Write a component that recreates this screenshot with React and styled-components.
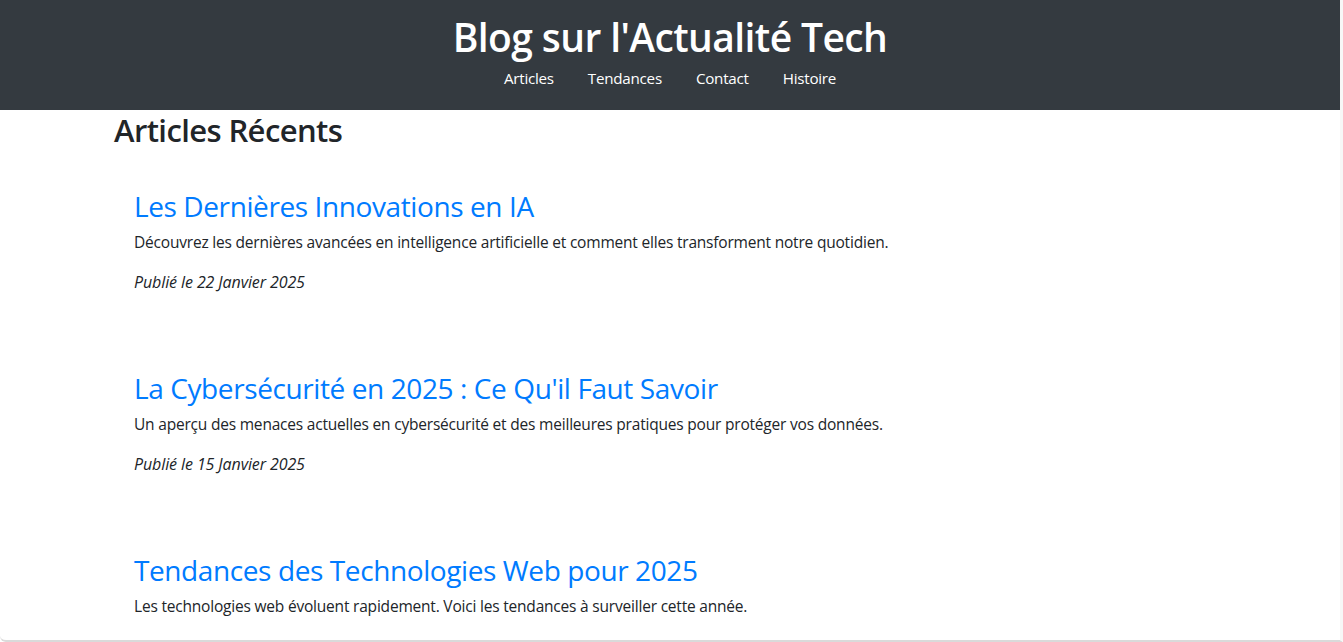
import styled, { createGlobalStyle } from 'styled-components'

const GlobalStyle = createGlobalStyle`
    html, body {
        margin: 0;
        padding: 0;
        background: #ffffff;
        overflow: hidden;
    }

    body {
        font-family: 'Open Sans', 'Noto Sans', sans-serif;
        color: #212529;
    }
`

const articles = [
    {
        title: 'Les Dernières Innovations en IA',
        text: 'Découvrez les dernières avancées en intelligence artificielle et comment elles transforment notre quotidien.',
        date: '22 Janvier 2025',
    },
    {
        title: "La Cybersécurité en 2025 : Ce Qu'il Faut Savoir",
        text: 'Un aperçu des menaces actuelles en cybersécurité et des meilleures pratiques pour protéger vos données.',
        date: '15 Janvier 2025',
    },
    {
        title: 'Tendances des Technologies Web pour 2025',
        text: 'Les technologies web évoluent rapidement. Voici les tendances à surveiller cette année.',
        date: '10 Janvier 2025',
    },
]

const App = () => {
    return (
        <Frame>
            <GlobalStyle />
            <Header>
                <Title>Blog sur l'Actualité Tech</Title>
                <Nav>
                    <NavLink href="#articles">Articles</NavLink>
                    <NavLink href="#tendances">Tendances</NavLink>
                    <NavLink href="#contact">Contact</NavLink>
                    <NavLink href="#histoire">Histoire</NavLink>
                </Nav>
            </Header>
            <Main id="articles">
                <SectionTitle>Articles Récents</SectionTitle>
                <ArticleList>
                    {articles.map((a) => (
                        <Article key={a.title}>
                            <ArticleTitle>{a.title}</ArticleTitle>
                            <ArticleText>{a.text}</ArticleText>
                            <ArticleDate>Publié le {a.date}</ArticleDate>
                        </Article>
                    ))}
                </ArticleList>
            </Main>
        </Frame>
    )
}

const Frame = styled.div`
    height: 100vh;
    box-sizing: border-box;
    overflow: hidden;
    border-right: 3px solid #f7f7f7;
    border-bottom: 2px solid #dadada;
    border-bottom-left-radius: 6px;
`

const Header = styled.header`
    background: #343a40;
    color: #ffffff;
    height: 110px;
    box-sizing: border-box;
    padding-top: 17px;
    display: flex;
    flex-direction: column;
    align-items: center;
`

const Title = styled.h1`
    margin: 0;
    font-size: 39px;
    line-height: 40px;
    font-weight: 600;
    letter-spacing: -0.6px;
`

const Nav = styled.nav`
    margin-top: 9px;
    display: flex;
    gap: 34px;
`

const NavLink = styled.a`
    color: #ffffff;
    text-decoration: none;
    font-size: 15.2px;
    line-height: 24px;
    letter-spacing: -0.25px;
`

const Main = styled.main`
    padding: 0 114px;
`

const SectionTitle = styled.h2`
    margin: 0;
    font-size: 31px;
    line-height: 40px;
    font-weight: 600;
    color: #212529;
    letter-spacing: -0.6px;
`

const ArticleList = styled.div`
    margin-top: 19px;
    display: flex;
    flex-direction: column;
    gap: 37px;
`

const Article = styled.article`
    padding: 20px;
`

const ArticleTitle = styled.h3`
    margin: 0 0 7px;
    font-size: 28px;
    line-height: 34px;
    font-weight: 500;
    color: #007bff;
    letter-spacing: -0.4px;
`

const ArticleText = styled.p`
    margin: 0 0 16px;
    font-size: 15.5px;
    line-height: 24px;
    color: #212529;
    letter-spacing: -0.2px;
`

const ArticleDate = styled.p`
    margin: 0;
    font-size: 16px;
    line-height: 24px;
    font-style: italic;
    color: #212529;
    letter-spacing: -0.1px;
`

export default App
